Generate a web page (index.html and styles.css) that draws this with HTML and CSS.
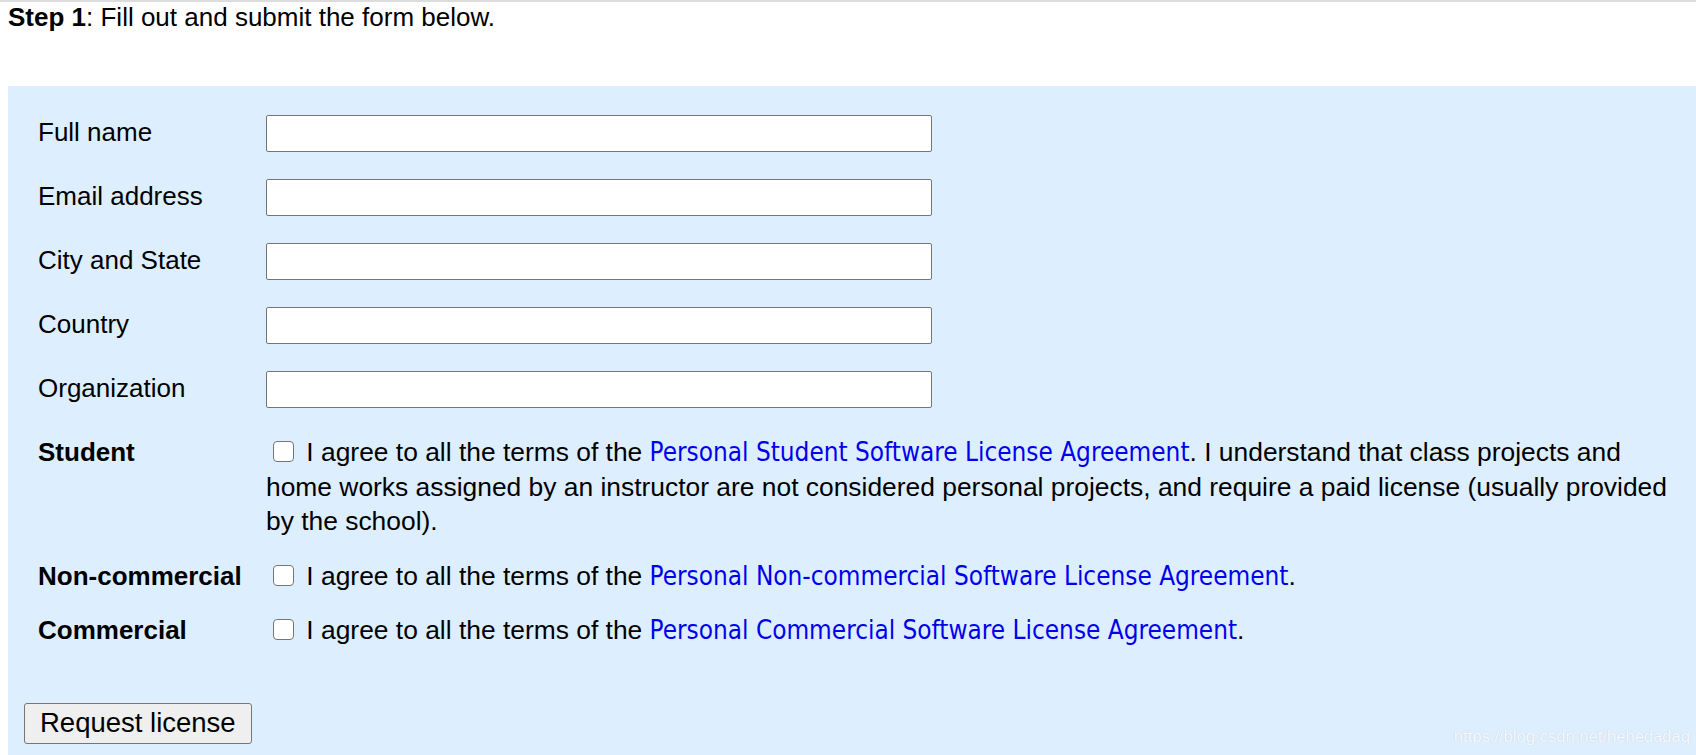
FILE: index.html
```html
<!DOCTYPE html>
<html lang="en">
<head>
  <meta charset="UTF-8">
  <title>Request license</title>
  <link rel="stylesheet" href="styles.css">
</head>
<body>
  <div class="topbar"></div>
  <p class="step"><b>Step 1</b>: Fill out and submit the form below.</p>

  <form class="panel">
    <div class="fields">
      <label class="row"><span class="name">Full name</span><input type="text"></label>
      <label class="row"><span class="name">Email address</span><input type="text"></label>
      <label class="row"><span class="name">City and State</span><input type="text"></label>
      <label class="row"><span class="name">Country</span><input type="text"></label>
      <label class="row"><span class="name">Organization</span><input type="text"></label>
      <div class="row text">
        <span class="name bold">Student</span>
        <p class="agree"><input type="checkbox"> I agree to all the terms of the <a href="#">Personal Student Software License Agreement</a>. I understand that class projects and home works assigned by an instructor are not considered personal projects, and require a paid license (usually provided by the school).</p>
      </div>
      <div class="row text">
        <span class="name bold">Non-commercial</span>
        <p class="agree"><input type="checkbox"> I agree to all the terms of the <a href="#">Personal Non-commercial Software License Agreement</a>.</p>
      </div>
      <div class="row text">
        <span class="name bold">Commercial</span>
        <p class="agree"><input type="checkbox"> I agree to all the terms of the <a href="#">Personal Commercial Software License Agreement</a>.</p>
      </div>
    </div>
    <button type="button">Request license</button>
  </form>

  <div class="watermark">https://blog.csdn.net/hehedadaq</div>
</body>
</html>
```

FILE: styles.css
```css
body {
  margin: 0;
  padding-left: 8px;
  font-family: "Liberation Sans", Arial, sans-serif;
  font-size: 26px;
  color: #000;
}
.topbar { height: 2px; background: #dcdcdc; margin-left: -8px; }
.step { margin: 0 0 54px; line-height: 30px; }

.panel {
  background: #ddeeff;
  padding: 29px 20px 30px 16px;
}
.row {
  display: grid;
  grid-template-columns: 228px 1fr;
  align-items: center;
  margin: 0 0 27px 14px;
}
.row.text {
  align-items: start;
  line-height: 34.6px;
  margin-bottom: 20px;
}
.row:last-child { margin-bottom: 0; }
.name { line-height: 30px; padding-bottom: 4px; }
.row.text .name { line-height: 34.6px; padding-bottom: 0; }
.bold { font-weight: bold; }

input[type="text"] {
  box-sizing: border-box;
  width: 666px;
  height: 37px;
  padding: 0 4px;
  border: 1px solid #767676;
  border-radius: 2px;
  background: #fff;
  font-size: 22px;
}
.agree { margin: 0; font-size: 26.4px; }
.agree input[type="checkbox"] {
  appearance: none;
  -webkit-appearance: none;
  box-sizing: border-box;
  width: 21px;
  height: 21px;
  margin: 0 5px 0 7px;
  border: 1px solid #767676;
  border-radius: 4px;
  background: #fff;
  vertical-align: -1px;
}
.agree a {
  font-family: "DejaVu Sans Condensed", "DejaVu Sans", sans-serif;
  font-stretch: condensed;
  font-size: 25.9px;
  color: #0000ee;
  text-decoration: none;
}

button {
  margin-top: 55px;
  height: 41px;
  padding: 0 15px;
  border: 1px solid #767676;
  border-radius: 3px;
  background: #efefef;
  font-family: "Liberation Sans", Arial, sans-serif;
  font-size: 27.5px;
  color: #000;
}

.watermark {
  position: absolute;
  right: 6px;
  top: 727px;
  font-size: 16.6px;
  line-height: 19px;
  color: #f6f9fd;
  text-shadow: 0 0 1px #b9c6d3;
}
```
